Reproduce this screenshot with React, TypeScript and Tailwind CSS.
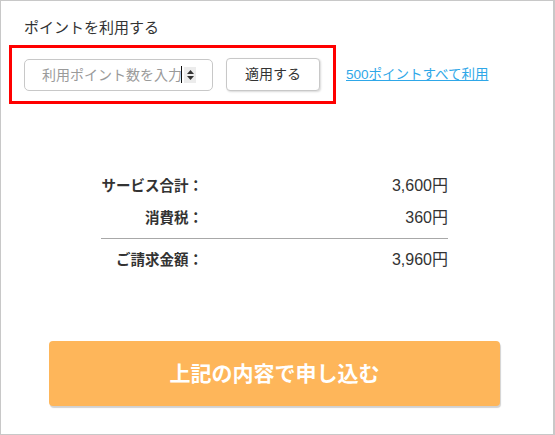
import React from 'react';

const jp = '"Liberation Sans", "Noto Sans CJK JP", sans-serif';

function Spinner() {
    return (
        <div className="ml-[2px] flex h-[16px] w-[12px] flex-col items-center justify-center gap-[2px] bg-[#ececec]">
            <svg width="7" height="4" viewBox="0 0 7 4"><path d="M3.5 0L7 4H0z" fill="#333" /></svg>
            <svg width="7" height="4" viewBox="0 0 7 4"><path d="M0 0h7L3.5 4z" fill="#333" /></svg>
        </div>
    );
}

function SummaryRow({ label, value, className = '' }: { label: string; value: string; className?: string }) {
    return (
        <div className={`flex h-[20px] items-center leading-[20px] ${className}`}>
            <div className="w-[102px] text-right text-[14.5px] font-bold text-[#333]">{label}</div>
            <div className="flex-1 text-right text-[16px] text-[#333]">{value}</div>
        </div>
    );
}

export default function App() {
    return (
        <div className="box-border flex h-[435px] w-[555px] flex-col border border-r-2 border-[#c8c8c8] bg-white" style={{ fontFamily: jp }}>
            <div className="pl-[23px] pt-[17px] text-[15px] leading-[20px] text-[#333]">ポイントを利用する</div>

            <div className="mt-[7px] flex items-center">
                <div className="ml-[8px] box-border flex h-[59px] w-[327px] items-center border-[3px] border-[#ff0000] pl-[12px]">
                    <div className="box-border flex h-[32px] w-[189px] items-center rounded-[5px] border border-[#c8c8c8] pl-[17px]">
                        <span className="text-[14px] leading-[20px] text-[#9a9a9a]">利用ポイント数を入力</span>
                        <span className="ml-[-1px] h-[17px] w-px bg-[#111]" />
                        <Spinner />
                    </div>
                    <button className="ml-[13px] box-border flex h-[33px] w-[94px] items-center justify-center rounded-[4px] border border-[#c8c8c8] bg-white text-[14px] text-[#333] shadow-[1px_1px_2px_rgba(0,0,0,0.15)]">
                        適用する
                    </button>
                </div>
                <a href="#" className="ml-[10px] text-[13.5px] leading-[18px] text-[#2ea7e8] underline">500ポイントすべて利用</a>
            </div>

            <div className="ml-[100px] mt-[72px] w-[347px]">
                <SummaryRow label="サービス合計：" value="3,600円" />
                <SummaryRow label="消費税：" value="360円" className="mt-[12px]" />
                <div className="mt-[10px] h-px bg-[#a8a8a8]" />
                <SummaryRow label="ご請求金額：" value="3,960円" className="mt-[11px]" />
            </div>

            <button className="ml-[48px] mt-[71px] flex h-[65px] w-[451px] items-center justify-center rounded-[4px] bg-[#feb65a] text-[21px] font-bold text-white shadow-[1px_2px_1px_rgba(0,0,0,0.18)]">
                上記の内容で申し込む
            </button>
        </div>
    );
}
